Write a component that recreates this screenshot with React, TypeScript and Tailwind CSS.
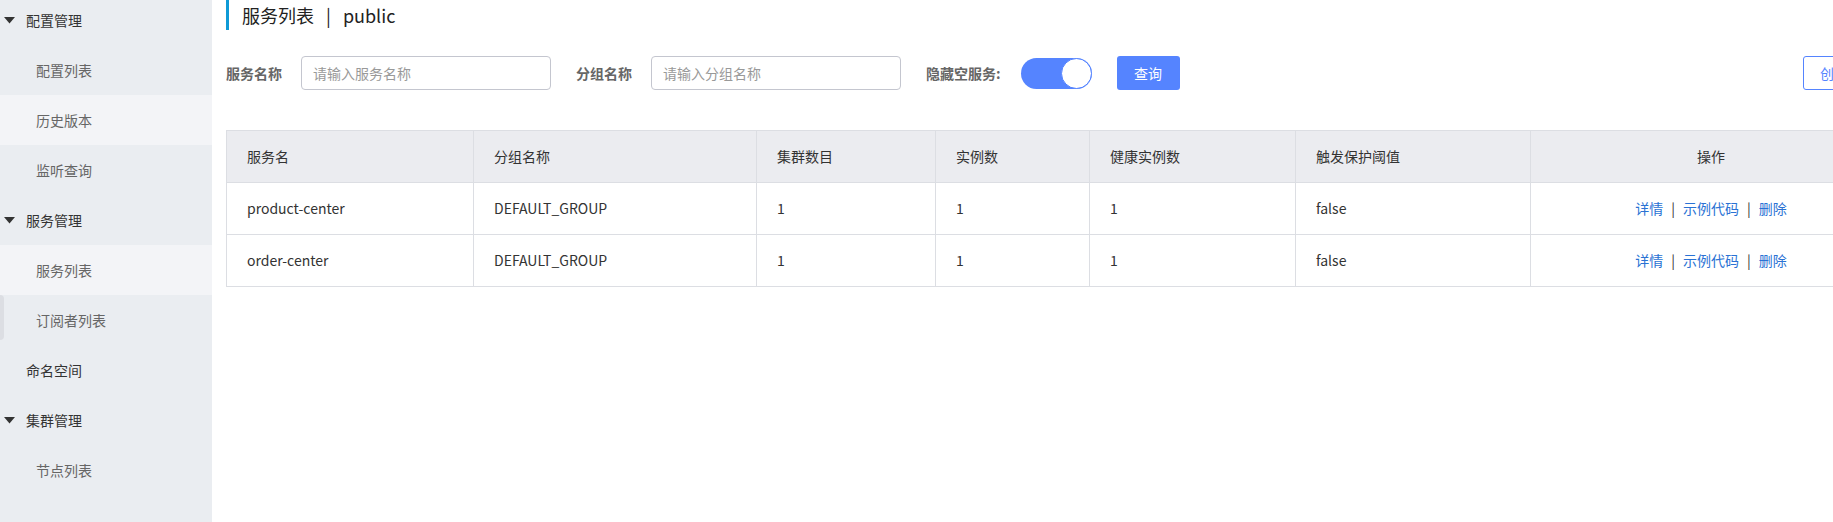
const font = 'font-["Noto_Sans_CJK_SC","Noto_Sans",sans-serif]'

type NavItem = { label: string; kind: 'group' | 'item' | 'top'; active?: boolean; hover?: boolean }

const nav: NavItem[] = [
  { label: '配置管理', kind: 'group' },
  { label: '配置列表', kind: 'item' },
  { label: '历史版本', kind: 'item', active: true },
  { label: '监听查询', kind: 'item' },
  { label: '服务管理', kind: 'group' },
  { label: '服务列表', kind: 'item', active: true },
  { label: '订阅者列表', kind: 'item', hover: true },
  { label: '命名空间', kind: 'top' },
  { label: '集群管理', kind: 'group' },
  { label: '节点列表', kind: 'item' },
]

const columns = [
  { title: '服务名', w: 'w-[247px]' },
  { title: '分组名称', w: 'w-[283px]' },
  { title: '集群数目', w: 'w-[179px]' },
  { title: '实例数', w: 'w-[154px]' },
  { title: '健康实例数', w: 'w-[206px]' },
  { title: '触发保护阈值', w: 'w-[235px]' },
]

const rows = [
  ['product-center', 'DEFAULT_GROUP', '1', '1', '1', 'false'],
  ['order-center', 'DEFAULT_GROUP', '1', '1', '1', 'false'],
]

function Caret() {
  return (
    <svg width="11" height="7" viewBox="0 0 11 7" className="mr-[11px] ml-[4px]">
      <path d="M0 0 H11 L5.5 6.5 Z" fill="#333" />
    </svg>
  )
}

function Sidebar() {
  return (
    <aside className="w-[212px] shrink-0 bg-[#eaedf1]">
      <ul className="mt-[-5px]">
        {nav.map((n) => (
          <li
            key={n.label}
            className={`relative flex h-[50px] items-center text-[14px] ${n.active ? 'bg-[#f3f4f7]' : ''}`}
          >
            {n.hover && <span className="absolute left-0 top-0 h-[45px] w-[4px] rounded-r-[4px] bg-[#dcdee3]" />}
            {n.kind === 'group' && <Caret />}
            {n.kind === 'group' && <span className="text-[#333]">{n.label}</span>}
            {n.kind === 'top' && <span className="pl-[26px] text-[#333]">{n.label}</span>}
            {n.kind === 'item' && <span className="pl-[36px] text-[#666]">{n.label}</span>}
          </li>
        ))}
      </ul>
    </aside>
  )
}

function Field({ label, placeholder }: { label: string; placeholder: string }) {
  return (
    <div className="flex items-center">
      <span className="mr-[19px] text-[14px] font-bold text-[#666]">{label}</span>
      <div className="flex h-[34px] w-[250px] items-center rounded-[4px] border border-[#c4c6cf] bg-white px-[11px] text-[14px] text-[#999]">
        {placeholder}
      </div>
    </div>
  )
}

export default function App() {
  return (
    <div className={`flex h-[522px] w-[1833px] overflow-hidden bg-white ${font}`}>
      <Sidebar />
      <main className="min-w-0 flex-1 overflow-hidden pl-[14px]">
        <div className="flex h-[30px] items-center border-l-[3px] border-[#0f9ad6] pl-[13px] text-[18px] text-[#222]">
          服务列表<span className="mx-[12px]">|</span>public
        </div>

        <div className="mt-[26px] flex h-[34px] items-center">
          <Field label="服务名称" placeholder="请输入服务名称" />
          <div className="ml-[25px]">
            <Field label="分组名称" placeholder="请输入分组名称" />
          </div>
          <span className="ml-[25px] text-[14px] font-bold text-[#666]">隐藏空服务:</span>
          <div className="ml-[20px] flex h-[31px] w-[71px] items-center justify-end rounded-full bg-[#5584ff]">
            <div className="h-[31px] w-[31px] rounded-full border border-[#5584ff] bg-white" />
          </div>
          <button className="ml-[25px] h-[34px] w-[63px] rounded-[3px] bg-[#5584ff] text-[14px] text-white">查询</button>
          <div className="flex-1" />
          <button className="mr-[-60px] h-[34px] w-[90px] shrink-0 whitespace-nowrap rounded-[3px] border border-[#5584ff] bg-white pl-[16px] text-left text-[14px] text-[#5584ff]">
            创建服务
          </button>
        </div>

        <table className="mt-[40px] w-[1666px] table-fixed border-collapse text-[14px] text-[#333]">
          <thead>
            <tr className="h-[52px] bg-[#ebecf0]">
              {columns.map((c) => (
                <th key={c.title} className={`${c.w} border border-[#dcdee3] px-[20px] text-left font-normal`}>
                  {c.title}
                </th>
              ))}
              <th className="border border-[#dcdee3] text-center font-normal">操作</th>
            </tr>
          </thead>
          <tbody>
            {rows.map((r) => (
              <tr key={r[0]} className="h-[52px]">
                {r.map((v, i) => (
                  <td key={i} className="border border-[#dcdee3] px-[20px]">
                    {v}
                  </td>
                ))}
                <td className="border border-[#dcdee3] text-center">
                  <span className="text-[#2a72d4]">详情</span>
                  <span className="mx-[8px] text-[#333]">|</span>
                  <span className="text-[#2a72d4]">示例代码</span>
                  <span className="mx-[8px] text-[#333]">|</span>
                  <span className="text-[#2a72d4]">删除</span>
                </td>
              </tr>
            ))}
          </tbody>
        </table>
      </main>
    </div>
  )
}
